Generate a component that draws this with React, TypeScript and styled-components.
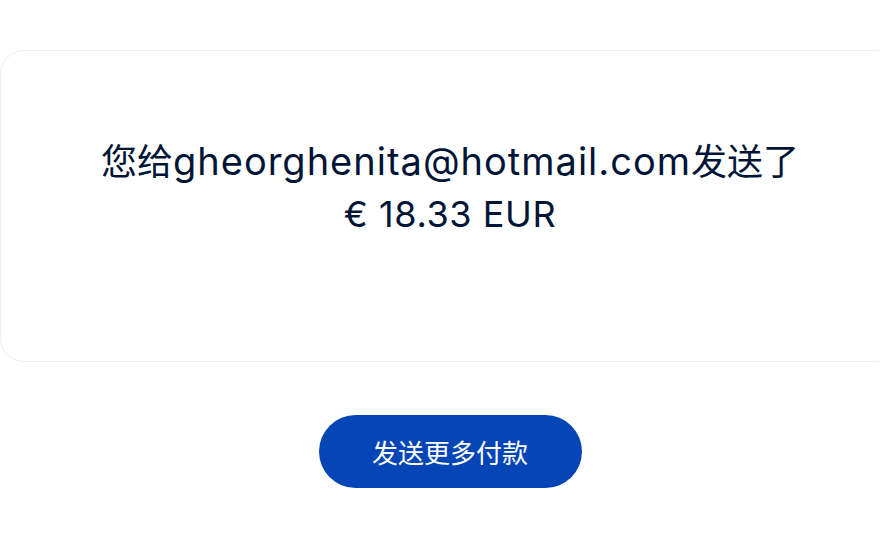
import styled, { createGlobalStyle } from 'styled-components';

const GlobalStyle = createGlobalStyle`
  html, body {
    margin: 0;
    padding: 0;
    background: #ffffff;
    overflow: hidden;
  }

  body {
    font-family: Inter, "Noto Sans CJK SC", sans-serif;
  }
`;

const Page = styled.div`
  width: 900px;
  padding-top: 50px;

  display: flex;
  flex-direction: column;
  align-items: center;
`;

const Card = styled.div`
  box-sizing: border-box;
  width: 900px;
  height: 312px;
  padding-top: 84px;

  border: 1px solid #efefef;
  border-radius: 24px;
  background: #ffffff;

  display: flex;
  flex-direction: column;
  align-items: center;
`;

const Message = styled.div<{ $spacing?: number }>`
  font-size: 36px;
  line-height: 52px;
  color: #001435;
  text-align: center;
  letter-spacing: ${(p) => p.$spacing ?? 0}px;
  white-space: nowrap;
`;

const Latin = styled.span`
  font-size: 38px;
  letter-spacing: 1px;
`;

const PrimaryButton = styled.button`
  margin-top: 53px;
  width: 263px;
  height: 73px;

  border: none;
  border-radius: 37px;
  background: #0545b5;
  color: #ffffff;

  font-family: Inter, "Noto Sans CJK SC", sans-serif;
  font-size: 26px;
  cursor: pointer;
`;

function App() {
  return (
    <>
      <GlobalStyle />
      <Page>
        <Card>
          <Message>
            您给<Latin>gheorghenita@hotmail.com</Latin>发送了
          </Message>
          <Message $spacing={0.6}>€ 18.33 EUR</Message>
        </Card>
        <PrimaryButton>发送更多付款</PrimaryButton>
      </Page>
    </>
  );
}

export default App;
